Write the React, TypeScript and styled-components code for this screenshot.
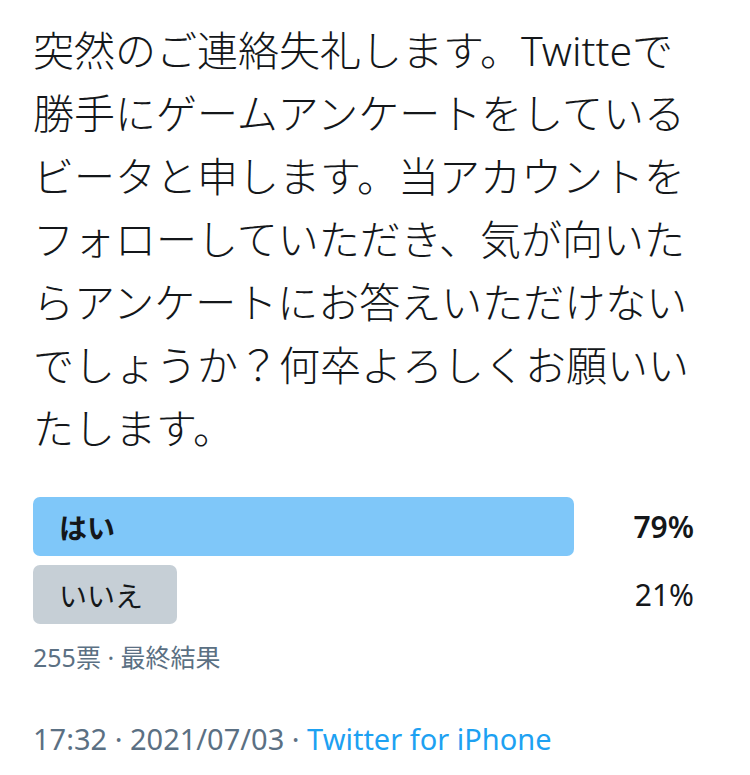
import styled, { createGlobalStyle } from 'styled-components';

const GlobalStyle = createGlobalStyle`
  html, body {
    margin: 0;
    padding: 0;
    background: #ffffff;
  }
  body {
    font-family: "Noto Sans", "Noto Sans CJK JP", sans-serif;
    color: #14171a;
  }
`;

export const Container = styled.div`
  width: 750px;
  min-height: 775px;
  padding: 19px 0 0 33px;
  box-sizing: border-box;
  background-color: white;
`;

export const TweetText = styled.p`
  margin: 0;
  font-family: "Noto Sans", "Noto Sans CJK JP", sans-serif;
  font-size: 41px;
  font-weight: 300;
  line-height: 63px;
  white-space: nowrap;
  color: #14171a;
`;

export const Poll = styled.div`
  margin-top: 37px;
  display: flex;
  flex-direction: column;
  gap: 9px;
`;

export const PollRow = styled.div`
  width: 660px;
  height: 59px;
  display: flex;
  align-items: center;
`;

export const Bar = styled.div<{ $winner: boolean }>`
  height: 59px;
  flex-shrink: 0;
  box-sizing: border-box;
  padding-left: 26px;
  border-radius: 7px;
  display: flex;
  align-items: center;
  white-space: nowrap;
  background-color: ${(p) => (p.$winner ? '#7fc7f9' : '#c6cfd6')};
  font-size: 28px;
  font-weight: ${(p) => (p.$winner ? 700 : 400)};
  color: #14171a;
`;

export const Percent = styled.span<{ $winner: boolean }>`
  margin-left: auto;
  margin-right: -1px;
  font-size: 30px;
  font-weight: ${(p) => (p.$winner ? 600 : 400)};
  color: #14171a;
`;

export const Votes = styled.div`
  margin-top: 17px;
  font-size: 25px;
  line-height: 32px;
  color: #5b7083;
`;

export const Meta = styled.div`
  margin-top: 46px;
  font-size: 29px;
  line-height: 40px;
  color: #5b7083;
  white-space: nowrap;
`;

export const Source = styled.span`
  color: #1da1f2;
`;

const lines = [
  '突然のご連絡失礼します。Twitteで',
  '勝手にゲームアンケートをしている',
  'ビータと申します。当アカウントを',
  'フォローしていただき、気が向いた',
  'らアンケートにお答えいただけない',
  'でしょうか？何卒よろしくお願いい',
  'たします。',
];

const options = [
  { label: 'はい', pct: 79, winner: true },
  { label: 'いいえ', pct: 21, winner: false },
];

const TRACK = 685;

export default function App() {
  return (
    <Container>
      <GlobalStyle />
      <TweetText>
        {lines.map((l, i) => (
          <span key={i}>
            {l}
            {i < lines.length - 1 && <br />}
          </span>
        ))}
      </TweetText>
      <Poll>
        {options.map((o) => (
          <PollRow key={o.label}>
            <Bar $winner={o.winner} style={{ width: (TRACK * o.pct) / 100 }}>
              {o.label}
            </Bar>
            <Percent $winner={o.winner}>{o.pct}%</Percent>
          </PollRow>
        ))}
      </Poll>
      <Votes>255票 · 最終結果</Votes>
      <Meta>
        17:32 · 2021/07/03 · <Source>Twitter for iPhone</Source>
      </Meta>
    </Container>
  );
}
